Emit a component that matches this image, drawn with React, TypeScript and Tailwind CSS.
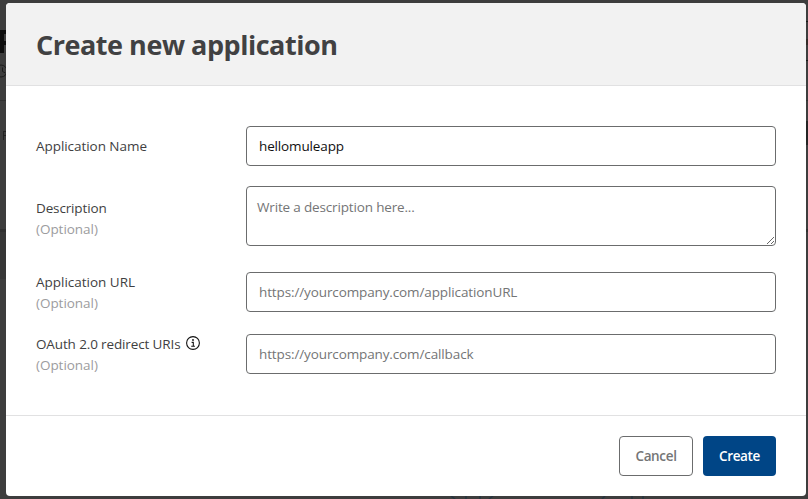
import type { ReactNode } from "react";

function LeftEdge() {
  return (
    <div className="row-span-3 flex flex-col overflow-hidden" aria-hidden="true">
      <div className="mt-[30px] flex h-[23px] items-start">
        <div className="h-full w-[4px] bg-[#0d0d0d]" />
        <div className="h-[15px] w-[2px] border-y-4 border-[#0d0d0d]" />
      </div>
      <svg className="-ml-[6px] mt-[11px] h-[14px] w-[14px] shrink-0" viewBox="0 0 14 14" fill="none" stroke="#1c1c1c">
        <circle cx="7" cy="7" r="6" />
        <path d="M8.5 3.5V7.5l3 1.5" />
      </svg>
      <div className="mt-[22px] h-px shrink-0 bg-[#303030]" />
      <div className="ml-[3px] mt-[30px] h-[9px] shrink-0 border-l border-[#222]">
        <div className="h-[5px] border-y border-[#222]" />
      </div>
      <div className="mt-[89px] h-[50px] shrink-0 border-t-[3px] border-[#303030] bg-[#373737]" />
    </div>
  );
}

function RightEdge() {
  return (
    <div className="row-span-3 flex flex-col" aria-hidden="true">
      <div className="mt-[21px] h-px bg-[#171717]" />
      <div className="mt-[17px] h-[6px] bg-[#332b28]" />
      <div className="mt-[15px] h-px bg-[#171717]" />
      <div className="mt-[39px] h-px bg-[#303030]" />
      <div className="mt-[20px] h-[24px] bg-[#242424]" />
      <div className="mt-[84px] h-[3px] bg-[#303030]" />
    </div>
  );
}

function BottomEdge() {
  return (
    <svg className="ml-[442px] h-[3px] w-[200px]" viewBox="0 0 200 3" fill="none" stroke="#26343f" strokeWidth="1.5" aria-hidden="true">
      <path d="M3 0l4 3M18 0v3M32 0v3M45 0l-4 3M157 0l-3 3M184 0v3M195 0v3" />
    </svg>
  );
}

function InfoIcon() {
  return (
    <svg className="mb-[3px] h-[14px] w-[14px] shrink-0" viewBox="0 0 14 14" fill="none" stroke="#111">
      <circle cx="7" cy="7" r="6.4" strokeWidth="1.1" />
      <circle cx="7" cy="4" r="0.9" fill="#111" stroke="none" />
      <path d="M5.6 6.4h1.7v3.7M5.2 10.3h3.7" strokeWidth="1.1" />
    </svg>
  );
}

function Field({ label, optional, icon, className, labelClass, children }: {
  label: string; optional?: boolean; icon?: ReactNode; className: string; labelClass: string; children: ReactNode;
}) {
  return (
    <div className={`flex ${className}`}>
      <label className={`w-[210px] shrink-0 leading-[21px] text-[#3f3f42] ${labelClass}`}>
        <span className="flex items-center gap-[6px] whitespace-nowrap">
          <span>{label}</span>
          {icon}
        </span>
        {optional && <span className="block tracking-[-0.04px] text-[#9c9c9e]">(Optional)</span>}
      </label>
      {children}
    </div>
  );
}

const box = "block w-[530px] rounded-[4px] border border-[#6b6c6d] bg-white outline-none placeholder:text-[#747576] placeholder:opacity-100";

export default function App() {
  return (
    <div className="grid h-[499px] w-[808px] grid-cols-[6px_800px_2px] grid-rows-[3px_493px_3px] overflow-hidden bg-[#3d3d3d] font-['Open_Sans','Noto_Sans',sans-serif] text-[13.5px]">
      <LeftEdge />
      <div />
      <RightEdge />
      <div role="dialog" className="flex flex-col overflow-hidden rounded-[4px] bg-white">
        <header className="flex h-[83px] shrink-0 items-center border-b border-[#e1e1e2] bg-[#f2f2f2] px-[30px] pt-px">
          <h1 className="whitespace-nowrap text-[27px] font-bold leading-[36px] tracking-[-0.47px] text-[#414142]">Create new application</h1>
        </header>
        <main className="h-[329px] px-[30px] pt-[40px]">
          <Field label="Application Name" className="h-[60px]" labelClass="pt-[10px] tracking-[-0.05px]">
            <input className={`${box} h-[40px] px-[12px] tracking-[-0.14px] text-[#101010]`} defaultValue="hellomuleapp" />
          </Field>
          <Field label="Description" optional className="h-[86px]" labelClass="pt-[12px] tracking-[-0.14px]">
            <textarea className={`${box} h-[60px] px-[10px] py-[10px] leading-[20px] tracking-[-0.16px]`} placeholder="Write a description here..." />
          </Field>
          <Field label="Application URL" optional className="h-[62px]" labelClass="tracking-[-0.01px]">
            <input className={`${box} h-[40px] px-[12px] tracking-[-0.12px]`} placeholder="https://yourcompany.com/applicationURL" />
          </Field>
          <Field label="OAuth 2.0 redirect URIs" optional icon={<InfoIcon />} className="h-[62px]" labelClass="tracking-[-0.13px]">
            <input className={`${box} h-[40px] px-[12px] tracking-[-0.12px]`} placeholder="https://yourcompany.com/callback" />
          </Field>
        </main>
        <footer className="flex flex-1 items-start justify-end gap-[10px] border-t border-[#e1e1e2] px-[30px] pt-[20px] font-semibold">
          <button className="h-[40px] w-[74px] rounded-[4px] border border-[#6b6c6d] bg-white tracking-[-0.35px] text-[#747576]">Cancel</button>
          <button className="h-[40px] w-[73px] rounded-[4px] bg-[#004586] tracking-[-0.35px] text-white">Create</button>
        </footer>
      </div>
      <BottomEdge />
    </div>
  );
}
